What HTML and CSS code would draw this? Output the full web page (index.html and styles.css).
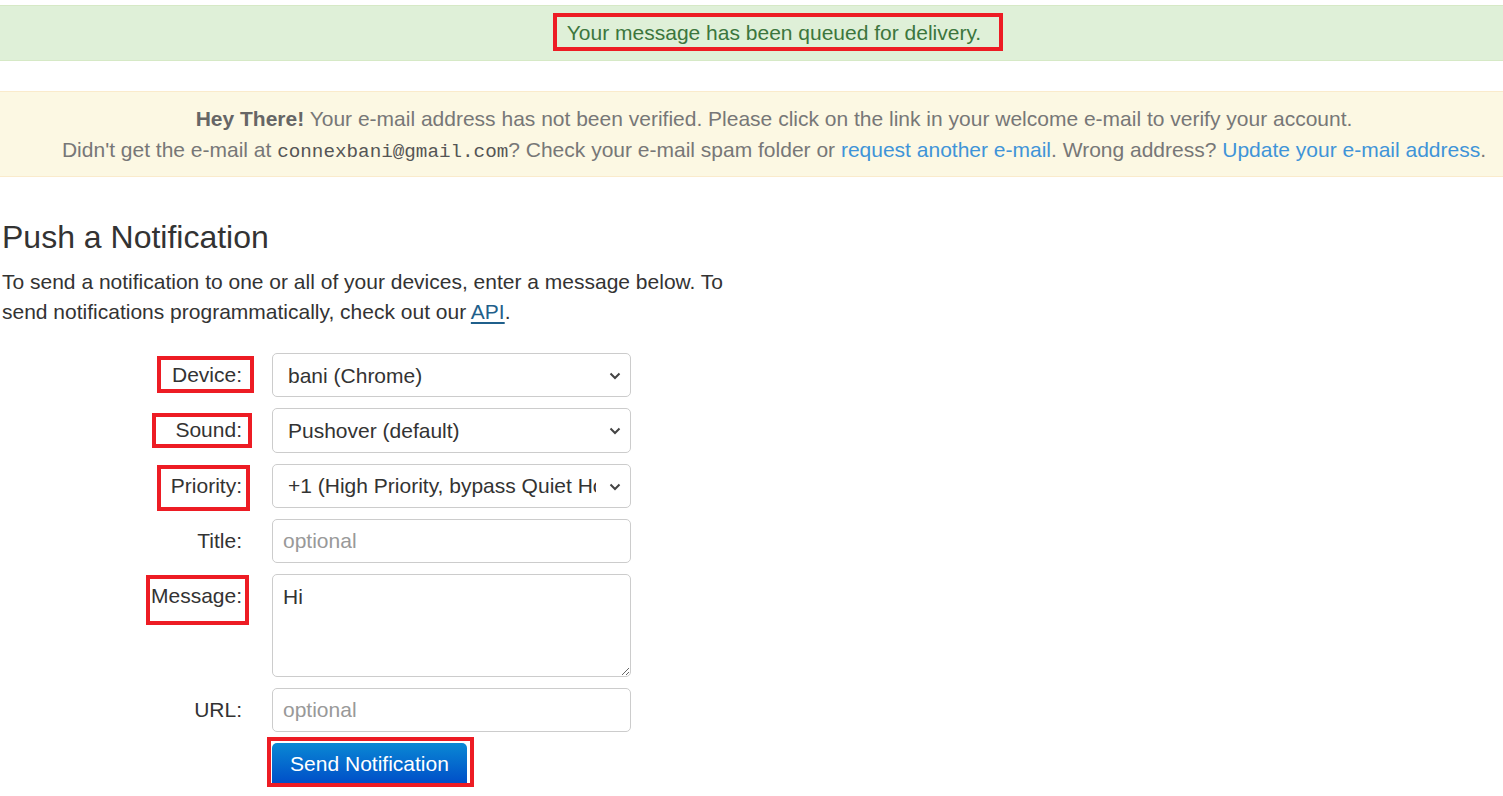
FILE: index.html
```html
<!DOCTYPE html>
<html lang="en">
<head>
<meta charset="utf-8">
<title>Push a Notification</title>
<link rel="stylesheet" href="styles.css">
</head>
<body>
<div class="page">
  <div class="alert alert-success">Your message has been queued for delivery.</div>

  <div class="alert alert-warning">
    <div><strong>Hey There!</strong> Your e-mail address has not been verified. Please click on the link in your welcome e-mail to verify your account.</div>
    <div>Didn't get the e-mail at <code>connexbani@gmail.com</code>? Check your e-mail spam folder or <a href="#">request another e-mail</a>. Wrong address? <a href="#">Update your e-mail address</a>.</div>
  </div>

  <section class="content">
    <h1 class="title">Push a Notification</h1>
    <p class="intro">To send a notification to one or all of your devices, enter a message below. To send notifications programmatically, check out our <a class="api" href="#">API</a>.</p>

    <form class="push-form">
      <label class="lbl" for="device">Device:</label>
      <div class="select-wrap">
        <select id="device" class="field select"><option>bani (Chrome)</option></select>
        <svg class="chev" width="12" height="8" viewBox="0 0 12 8"><path d="M1.5 1.5 L6 6 L10.5 1.5" fill="none" stroke="#444" stroke-width="2"/></svg>
      </div>

      <label class="lbl" for="sound">Sound:</label>
      <div class="select-wrap">
        <select id="sound" class="field select"><option>Pushover (default)</option></select>
        <svg class="chev" width="12" height="8" viewBox="0 0 12 8"><path d="M1.5 1.5 L6 6 L10.5 1.5" fill="none" stroke="#444" stroke-width="2"/></svg>
      </div>

      <label class="lbl" for="priority">Priority:</label>
      <div class="select-wrap">
        <select id="priority" class="field select"><option>+1 (High Priority, bypass Quiet Hours)</option></select>
        <svg class="chev" width="12" height="8" viewBox="0 0 12 8"><path d="M1.5 1.5 L6 6 L10.5 1.5" fill="none" stroke="#444" stroke-width="2"/></svg>
      </div>

      <label class="lbl" for="title">Title:</label>
      <input id="title" class="field input" type="text" placeholder="optional">

      <label class="lbl lbl-top" for="message">Message:</label>
      <textarea id="message" class="field textarea">Hi</textarea>

      <label class="lbl" for="url">URL:</label>
      <input id="url" class="field input" type="text" placeholder="optional">

      <span></span>
      <div><button type="button" class="btn">Send Notification</button></div>
    </form>
  </section>

  <div class="mark m-success"></div>
  <div class="mark m-device"></div>
  <div class="mark m-sound"></div>
  <div class="mark m-priority"></div>
  <div class="mark m-message"></div>
  <div class="mark m-button"></div>
</div>
</body>
</html>
```

FILE: styles.css
```css
* { box-sizing: border-box; }

html, body {
  margin: 0;
  padding: 0;
  background: #fff;
}

body {
  font-family: "Liberation Sans", Arial, sans-serif;
  font-size: 21px;
  color: #333;
}

.page {
  position: relative;
  width: 1503px;
  height: 796px;
  overflow: hidden;
  padding-top: 5px;
}

.alert {
  text-align: center;
  padding-left: 45px;
}

.alert-success {
  height: 56px;
  background: #dff0d8;
  border-top: 1px solid #d6e9c6;
  border-bottom: 1px solid #d6e9c6;
  color: #3c763d;
  font-size: 21px;
  line-height: 54px;
}

.alert-warning {
  margin-top: 30px;
  height: 86px;
  background: #fcf8e3;
  border-top: 1px solid #faebcc;
  border-bottom: 1px solid #faebcc;
  color: #777;
  font-size: 21px;
  line-height: 31px;
  padding-top: 11px;
}

.alert-warning strong {
  color: #666;
}

.alert-warning code {
  font-family: "Liberation Mono", "DejaVu Sans Mono", monospace;
  font-size: 19.25px;
  color: #555;
}

.alert-warning a {
  color: #3f94d8;
  text-decoration: none;
}

.content {
  padding-left: 2px;
}

.title {
  margin: 40px 0 0 0;
  font-size: 32px;
  font-weight: normal;
  line-height: 40px;
  color: #333;
}

.intro {
  margin: 10px 0 0 0;
  width: 740px;
  font-size: 21px;
  line-height: 30px;
  color: #333;
}

.intro .api {
  color: #1f5f8b;
  text-decoration: underline;
  text-underline-offset: 3px;
}

.push-form {
  margin-top: 26px;
  display: grid;
  grid-template-columns: 240px 359px;
  column-gap: 30px;
  row-gap: 11px;
  align-items: center;
}

.lbl {
  text-align: right;
  font-size: 21px;
  color: #333;
}

.lbl-top {
  align-self: start;
  padding-top: 10px;
}

.field {
  display: block;
  width: 359px;
  height: 44.3px;
  border: 1px solid #ccc;
  border-radius: 5px;
  background: #fff;
  font-family: "Liberation Sans", Arial, sans-serif;
  font-size: 21px;
  color: #333;
  margin: 0;
  outline: none;
}

.select-wrap {
  position: relative;
}

.select {
  appearance: none;
  -webkit-appearance: none;
  padding: 0 34px 0 15px;
}

.chev {
  position: absolute;
  right: 10px;
  top: 19px;
  pointer-events: none;
}

.input {
  padding: 0 10px;
}

.input::placeholder {
  color: #999;
}

.textarea {
  height: 103px;
  padding: 9px 10px;
  resize: vertical;
  line-height: 26px;
}

.btn {
  display: block;
  width: 195px;
  height: 40px;
  border: 0;
  border-radius: 5px 5px 0 0;
  background: linear-gradient(#0a88d4, #004fc8);
  color: #fff;
  font-family: "Liberation Sans", Arial, sans-serif;
  font-size: 21px;
  padding: 2px 0 0 0;
  cursor: pointer;
}

.mark {
  position: absolute;
  border: 4px solid #ed1c24;
  pointer-events: none;
}

.m-success { left: 553px; top: 13px; width: 450px; height: 38px; }
.m-device { left: 157px; top: 356px; width: 97px; height: 37px; }
.m-sound { left: 152px; top: 413px; width: 100px; height: 35px; }
.m-priority { left: 157px; top: 465px; width: 93px; height: 46px; }
.m-message { left: 146px; top: 575px; width: 103px; height: 50px; }
.m-button { left: 267px; top: 737px; width: 207px; height: 50px; }
```
